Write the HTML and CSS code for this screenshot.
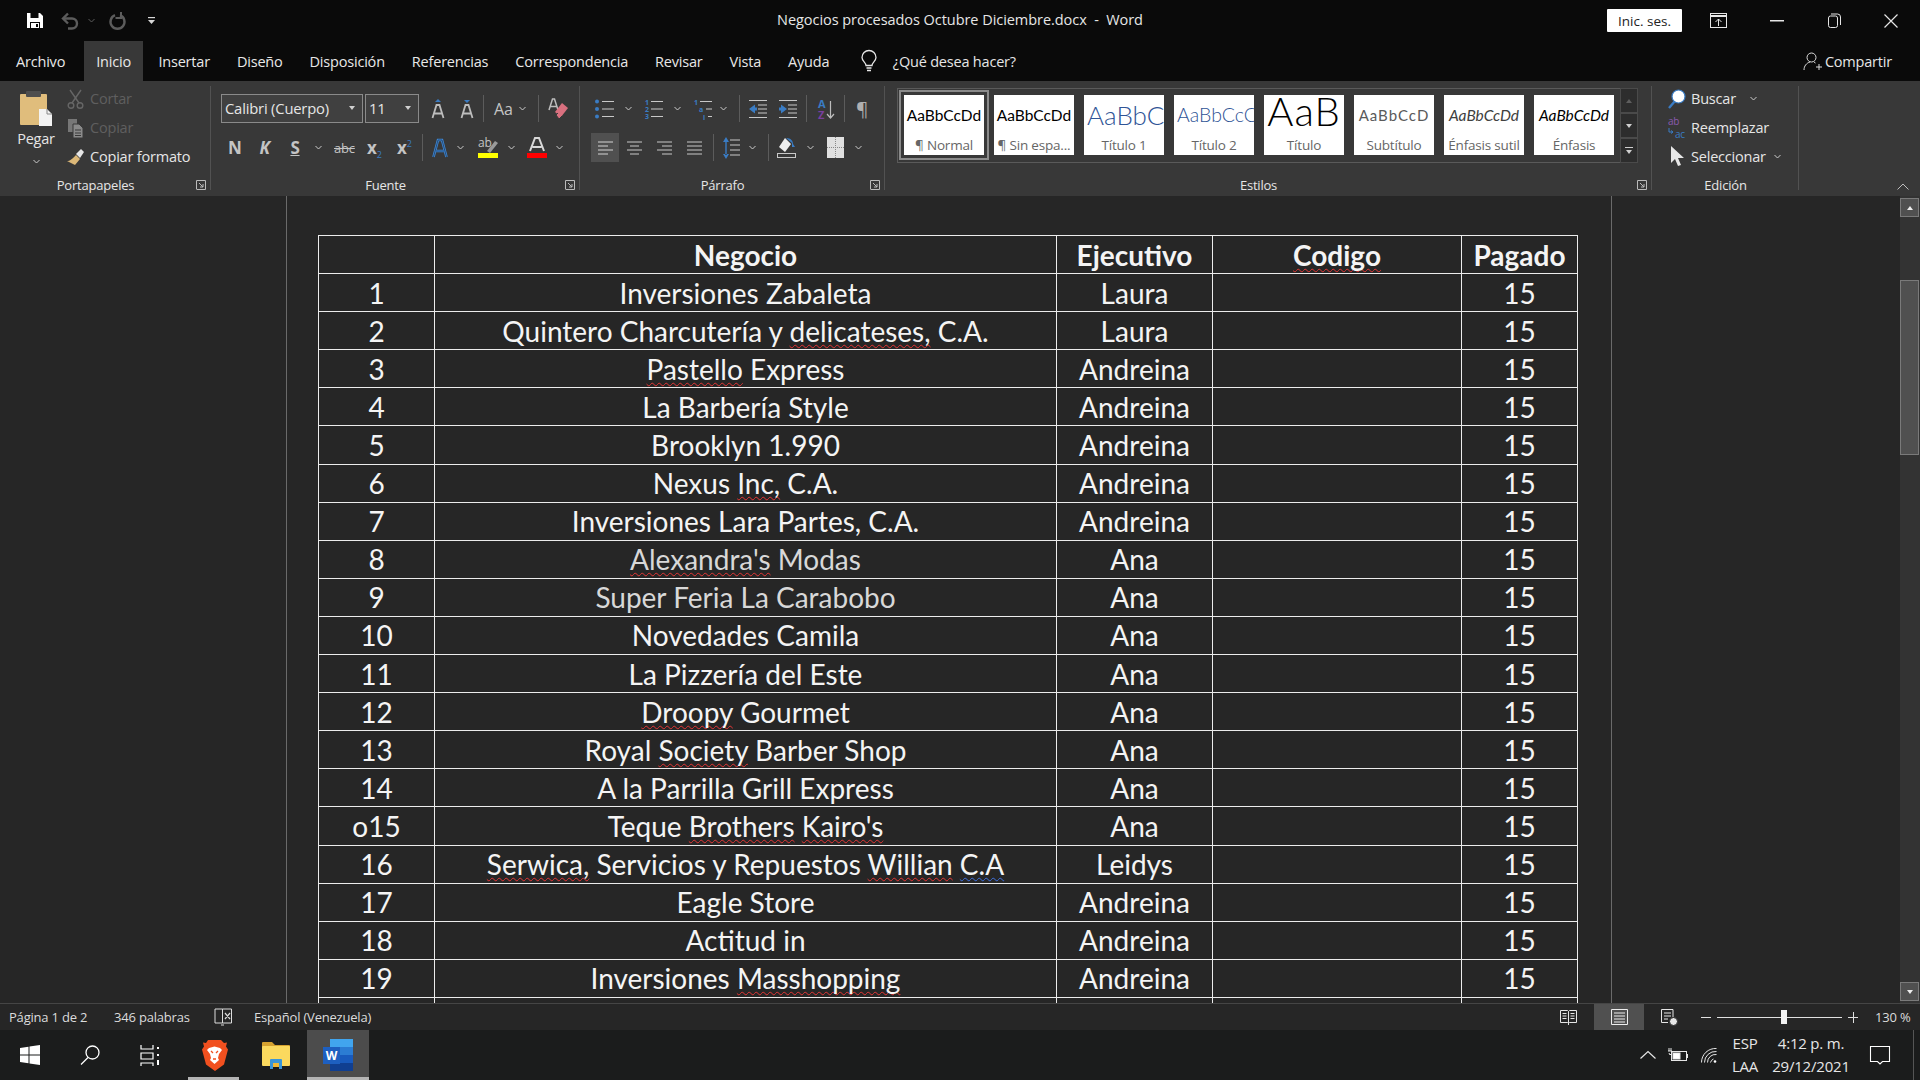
FILE: index.html
```html
<!DOCTYPE html>
<html lang="es">
<head>
  <meta charset="UTF-8">
  <title>Negocios procesados Octubre Diciembre.docx - Word</title>
  <link rel="stylesheet" href="styles.css">
</head>
<body>
<div class="app">

  <!-- title bar -->
  <header class="titlebar">
    <div class="qat">
      <svg class="ml26" width="18" height="17" viewBox="0 0 18 17"><path d="M1 1h13l3 3v12H1z" fill="#fff"/><rect x="4.5" y="1" width="8" height="5" fill="#0a0a0a"/><rect x="4" y="10" width="10" height="6" fill="#0a0a0a"/><rect x="5" y="11" width="8" height="5" fill="#fff"/><rect x="10" y="12" width="2" height="3" fill="#0a0a0a"/></svg>
      <svg class="ml17" width="18" height="17" viewBox="0 0 18 17" fill="none" stroke="#5c5c5c" stroke-width="2.4"><path d="M7 1.5 2 6.5l5 5"/><path d="M2 6.5h9a5 5 0 0 1 0 10H7"/></svg>
      <svg class="ml9" width="7" height="5" viewBox="0 0 7 5" fill="none" stroke="#5c5c5c"><path d="m.5 1 3 3 3-3"/></svg>
      <svg class="ml14" width="17" height="18" viewBox="0 0 17 18" fill="none" stroke="#5c5c5c" stroke-width="2.4"><path d="M11 3.2a7 7 0 1 1-5 0"/><path d="M12 0v6H6.5" stroke-width="2"/></svg>
      <svg class="ml22" width="7" height="8" viewBox="0 0 7 8" fill="#d8d8d8"><rect x="0" y="0" width="7" height="1.2"/><path d="M0 3h7L3.500 7z"/></svg>
    </div>
    <div class="doc-title">Negocios procesados Octubre Diciembre.docx &nbsp;-&nbsp; Word</div>
    <div class="window-ctrls">
      <button class="signin">Inic. ses.</button>
      <svg class="ml28" width="18" height="15" viewBox="0 0 18 15" fill="none" stroke="#e6e6e6"><rect x=".5" y=".5" width="16" height="14"/><path d="M.5 3h16" stroke-width="2"/><path d="M8.500 13V6M5.500 9l3-3 3 3"/></svg>
      <svg class="ml42" width="14" height="2" viewBox="0 0 14 2"><rect width="14" height="1.500" fill="#e6e6e6"/></svg>
      <svg class="ml44" width="13" height="15" viewBox="0 0 13 15" fill="none" stroke="#e6e6e6"><rect x=".5" y="3" width="9" height="11.500" rx="2"/><path d="M3 1h6.500a3 3 0 0 1 3 3v8"/></svg>
      <svg class="ml43" width="14" height="14" viewBox="0 0 14 14" stroke="#e6e6e6" stroke-width="1.200"><path d="m.5.500 13 13M13.500.500l-13 13"/></svg>
    </div>
  </header>

  <!-- tabs -->
  <nav class="tabs">
    <a class="tab first">Archivo</a>
    <a class="tab active">Inicio</a>
    <a class="tab">Insertar</a>
    <a class="tab">Diseño</a>
    <a class="tab">Disposición</a>
    <a class="tab">Referencias</a>
    <a class="tab">Correspondencia</a>
    <a class="tab">Revisar</a>
    <a class="tab">Vista</a>
    <a class="tab">Ayuda</a>
    <svg class="bulb" width="16" height="21" viewBox="0 0 16 21" fill="none" stroke="#e6e6e6" stroke-width="1.300"><path d="M5 14.500c0-3-4-4.500-4-8a7 7 0 0 1 14 0c0 3.500-4 5-4 8z"/><path d="M5.500 17h5M6 19.500h4"/></svg>
    <span class="tell-me">¿Qué desea hacer?</span>
    <div class="share">
      <svg width="19" height="19" viewBox="0 0 19 19" fill="none" stroke="#dcdcdc"><circle cx="8.500" cy="5.500" r="4.500"/><path d="M1 18c0-4 2.500-7 6-8M11 10l1.500 1M13 15h6M16 12v6"/></svg>
      <span>Compartir</span>
    </div>
  </nav>

  <!-- ribbon -->
  <section class="ribbon">

    <div class="group clip-group">
      <div class="group-body">
        <div class="paste">
          <svg width="34" height="36" viewBox="0 0 34 36"><rect x="1" y="4" width="27" height="31" rx="1" fill="#e0bd7c"/><rect x="7" y="1" width="15" height="6" rx="1" fill="#4e4e4e"/><path d="M20 19h8l5 5v12H20z" fill="#f2f2f2"/><path d="M28 19v5h5" fill="none" stroke="#888"/></svg>
          <span class="paste-label">Pegar</span>
          <svg width="7" height="5" viewBox="0 0 7 5" fill="none" stroke="#ccc"><path d="m.5 1 3 3 3-3"/></svg>
        </div>
        <div class="small-btns">
          <div class="small-btn off">
            <svg width="17" height="20" viewBox="0 0 17 20" fill="none" stroke="#666" stroke-width="1.400"><path d="M3 1l9 13M14 1 5 14"/><circle cx="4" cy="16.500" r="2.800"/><circle cx="13" cy="16.500" r="2.800"/></svg>
            <span>Cortar</span>
          </div>
          <div class="small-btn off">
            <svg width="17" height="20" viewBox="0 0 17 20"><rect x="1" y="1" width="9" height="13" fill="#777"/><path d="M6 6h6l4 4v10H6z" fill="#8a8a8a" stroke="#383838"/><path d="M8 12h6M8 15h6M8 17.500h6" stroke="#383838"/></svg>
            <span>Copiar</span>
          </div>
          <div class="small-btn">
            <svg width="17" height="18" viewBox="0 0 17 18"><path d="M9 7l4 4-5 6-8-4c3 0 5-2 9-6z" fill="#dcb878"/><path d="m9 6 5-5 3 3-4 6z" fill="#e6e6e6"/></svg>
            <span>Copiar formato</span>
          </div>
        </div>
      </div>
      <div class="group-label">Portapapeles</div>
      <svg class="launcher" width="10" height="10" viewBox="0 0 10 10" fill="none" stroke="#bbb"><path d="M.5 9V.5H9.500V9.500H.5"/><path d="M3 3l4 4M7 4v3H4"/></svg>
    </div>

    <div class="group font-group">
      <div class="tool-row">
        <div class="combo font-name"><span>Calibri (Cuerpo)</span><i class="tri"></i></div>
        <div class="combo font-size ml2"><span>11</span><i class="tri"></i></div>
        <svg class="ml11" width="16" height="20" viewBox="0 0 16 20"><path d="M8 0l3 3H5z" fill="#3a7cc4"/><path d="M2.500 19 6.500 6h3l4 13M4.500 14.500h7" fill="none" stroke="#bdbdbd" stroke-width="1.800"/></svg>
        <svg class="ml13" width="16" height="20" viewBox="0 0 16 20"><path d="M8 4l3-3H5z" fill="#3a7cc4"/><path d="M2.500 19 6.500 6h3l4 13M4.500 14.500h7" fill="none" stroke="#bdbdbd" stroke-width="1.800"/></svg>
        <i class="vsep ml8"></i>
        <span class="aa ml10">Aa</span>
        <svg class="ml6" width="7" height="5" viewBox="0 0 7 5" fill="none" stroke="#ccc"><path d="m.5 1 3 3 3-3"/></svg>
        <i class="vsep ml12"></i>
        <svg class="ml9" width="21" height="22" viewBox="0 0 21 22"><path d="M1 12 4.500 1h2L10 12M2.500 8.500h6" fill="none" stroke="#bdbdbd" stroke-width="1.500"/><path d="m14 5 6 5-7 9-6-5z" fill="#d9707f"/><path d="m10 15-2 2 3 4 3-3" fill="#d9707f" stroke="#383838"/></svg>
      </div>
      <div class="tool-row">
        <span class="fmt fmt-n ml7">N</span>
        <span class="fmt fmt-k ml19">K</span>
        <span class="fmt fmt-s ml20">S</span>
        <svg class="ml15" width="7" height="5" viewBox="0 0 7 5" fill="none" stroke="#ccc"><path d="m.5 1 3 3 3-3"/></svg>
        <span class="fmt fmt-abc ml12">abc</span>
        <span class="fmt fmt-x ml13">x<sub>2</sub></span>
        <span class="fmt fmt-x ml16">x<sup>2</sup></span>
        <i class="vsep ml11"></i>
        <svg class="ml9" width="16" height="20" viewBox="0 0 16 20"><path d="M1.500 19 6 2h4l4.500 17M4 13h8" fill="none" stroke="#3f86d2" stroke-width="2.600"/><path d="M1.500 19 6 2h4l4.500 17M4 13h8" fill="none" stroke="#1d3d63" stroke-width=".8"/></svg>
        <svg class="ml9" width="7" height="5" viewBox="0 0 7 5" fill="none" stroke="#ccc"><path d="m.5 1 3 3 3-3"/></svg>
        <svg class="ml14" width="20" height="20" viewBox="0 0 20 20"><text x="0" y="9" class="svg-ab">ab</text><path d="m9 13 8-10 3 2-8 10z" fill="#9a9a9a"/><rect y="15" width="20" height="5" fill="#ff0"/></svg>
        <svg class="ml10" width="7" height="5" viewBox="0 0 7 5" fill="none" stroke="#ccc"><path d="m.5 1 3 3 3-3"/></svg>
        <svg class="ml12" width="20" height="21" viewBox="0 0 20 21"><path d="M3 14 8 1h4l5 13M5.500 10h9" fill="none" stroke="#d8d8d8" stroke-width="2"/><rect y="16" width="20" height="5" fill="#f00"/></svg>
        <svg class="ml9" width="7" height="5" viewBox="0 0 7 5" fill="none" stroke="#ccc"><path d="m.5 1 3 3 3-3"/></svg>
      </div>
      <div class="group-label">Fuente</div>
      <svg class="launcher" width="10" height="10" viewBox="0 0 10 10" fill="none" stroke="#bbb"><path d="M.5 9V.5H9.500V9.500H.5"/><path d="M3 3l4 4M7 4v3H4"/></svg>
    </div>

    <div class="group para-group">
      <div class="tool-row">
        <svg class="ml4" width="19" height="20" viewBox="0 0 19 20"><g fill="#3a7cc4"><circle cx="2" cy="2.500" r="2"/><circle cx="2" cy="10" r="2"/><circle cx="2" cy="17.500" r="2"/></g><path d="M7 2.500h12M7 10h12M7 17.500h12" stroke="#c8c8c8" stroke-width="1.200"/></svg>
        <svg class="ml11" width="7" height="5" viewBox="0 0 7 5" fill="none" stroke="#ccc"><path d="m.5 1 3 3 3-3"/></svg>
        <svg class="ml13" width="18" height="20" viewBox="0 0 18 20"><g class="svg-num"><text x="0" y="6">1</text><text x="0" y="13">2</text><text x="0" y="20">3</text></g><path d="M6 2.500h12M6 10h12M6 17.500h12" stroke="#c8c8c8" stroke-width="1.200"/></svg>
        <svg class="ml11" width="7" height="5" viewBox="0 0 7 5" fill="none" stroke="#ccc"><path d="m.5 1 3 3 3-3"/></svg>
        <svg class="ml13" width="18" height="20" viewBox="0 0 18 20"><g class="svg-num"><text x="0" y="6">1</text><text x="5" y="13">a</text><text x="9" y="21">i</text></g><path d="M6 2.500h12M12 10h6M14 17.500h4" stroke="#c8c8c8" stroke-width="1.200"/></svg>
        <svg class="ml8" width="7" height="5" viewBox="0 0 7 5" fill="none" stroke="#ccc"><path d="m.5 1 3 3 3-3"/></svg>
        <i class="vsep ml12"></i>
        <svg class="ml9" width="18" height="20" viewBox="0 0 18 20"><path d="M0 1.500h18M9 6h9M9 10h9M9 14h9M0 18.500h18" stroke="#c8c8c8" stroke-width="1.200"/><path d="M0 10 6 5.500v3h2v3H6v3z" fill="#3a7cc4"/></svg>
        <svg class="ml12" width="18" height="20" viewBox="0 0 18 20"><path d="M0 1.500h18M9 6h9M9 10h9M9 14h9M0 18.500h18" stroke="#c8c8c8" stroke-width="1.200"/><path d="M8 10 2 5.500v3H0v3h2v3z" fill="#3a7cc4"/></svg>
        <i class="vsep ml9"></i>
        <svg class="ml11" width="16" height="22" viewBox="0 0 16 22"><text x="0" y="10" class="svg-az az-a">A</text><text x="0" y="21" class="svg-az az-z">Z</text><path d="M12.500 3v17M9 16l3.500 4 3.500-4" fill="none" stroke="#bdbdbd" stroke-width="1.200"/></svg>
        <i class="vsep ml10"></i>
        <span class="pilcrow ml11">¶</span>
      </div>
      <div class="tool-row">
        <span class="align-on"><svg width="15" height="14" viewBox="0 0 15 14" stroke="#d4d4d4" stroke-width="1.200"><path d="M0 1h15M0 5h10M0 9h15M0 13h10"/></svg></span>
        <svg class="ml8" width="15" height="14" viewBox="0 0 15 14" stroke="#c8c8c8" stroke-width="1.200"><path d="M0 1h15M3 5h9M0 9h15M3 13h9"/></svg>
        <svg class="ml15" width="15" height="14" viewBox="0 0 15 14" stroke="#c8c8c8" stroke-width="1.200"><path d="M0 1h15M5 5h10M0 9h15M5 13h10"/></svg>
        <svg class="ml15" width="15" height="14" viewBox="0 0 15 14" stroke="#c8c8c8" stroke-width="1.200"><path d="M0 1h15M0 5h15M0 9h15M0 13h15"/></svg>
        <i class="vsep ml11"></i>
        <svg class="ml9" width="17" height="22" viewBox="0 0 17 22"><path d="M7 3h10M7 8h10M7 13h10M7 18h10" stroke="#c8c8c8" stroke-width="1.200"/><path d="M3 0l3 5H0zM3 22l3-5H0zM2.300 4h1.400v14H2.300z" fill="#3a7cc4"/></svg>
        <svg class="ml9" width="7" height="5" viewBox="0 0 7 5" fill="none" stroke="#ccc"><path d="m.5 1 3 3 3-3"/></svg>
        <i class="vsep ml12"></i>
        <svg class="ml8" width="19" height="21" viewBox="0 0 19 21"><path d="m8 1 6 6-6 8-6-5z" fill="#eee"/><path d="M9 1c5 0 7 3 7 6l2 3h-3V6" fill="#3a7cc4"/><rect x=".5" y="16.500" width="18" height="4" fill="none" stroke="#c8c8c8"/></svg>
        <svg class="ml11" width="7" height="5" viewBox="0 0 7 5" fill="none" stroke="#ccc"><path d="m.5 1 3 3 3-3"/></svg>
        <svg class="ml13" width="17" height="21" viewBox="0 0 17 21"><rect width="17" height="21" fill="#e0e0e0"/><path d="M8.500 0v21M0 10.500h17" stroke="#888" stroke-dasharray="1 1"/></svg>
        <svg class="ml11" width="7" height="5" viewBox="0 0 7 5" fill="none" stroke="#ccc"><path d="m.5 1 3 3 3-3"/></svg>
      </div>
      <div class="group-label">Párrafo</div>
      <svg class="launcher" width="10" height="10" viewBox="0 0 10 10" fill="none" stroke="#bbb"><path d="M.5 9V.5H9.500V9.500H.5"/><path d="M3 3l4 4M7 4v3H4"/></svg>
    </div>

    <div class="group styles-group">
      <div class="gallery-wrap">
        <div class="gallery">
          <div class="style-tile selected"><div class="sample s-normal">AaBbCcDd</div><div class="tile-label">¶ Normal</div></div>
          <div class="style-tile"><div class="sample s-normal">AaBbCcDd</div><div class="tile-label">¶ Sin espa...</div></div>
          <div class="style-tile"><div class="sample s-h1">AaBbCc</div><div class="tile-label">Título 1</div></div>
          <div class="style-tile"><div class="sample s-h2">AaBbCcC</div><div class="tile-label">Título 2</div></div>
          <div class="style-tile"><div class="sample s-title">AaB</div><div class="tile-label">Título</div></div>
          <div class="style-tile"><div class="sample s-sub">AaBbCcD</div><div class="tile-label">Subtítulo</div></div>
          <div class="style-tile"><div class="sample s-em-soft">AaBbCcDd</div><div class="tile-label">Énfasis sutil</div></div>
          <div class="style-tile"><div class="sample s-em">AaBbCcDd</div><div class="tile-label">Énfasis</div></div>
        </div>
        <div class="gallery-scroll">
          <div class="gs-btn"><i class="tri up dim"></i></div>
          <div class="gs-btn"><i class="tri"></i></div>
          <div class="gs-btn more"><b></b><i class="tri"></i></div>
        </div>
      </div>
      <div class="group-label">Estilos</div>
      <svg class="launcher" width="10" height="10" viewBox="0 0 10 10" fill="none" stroke="#bbb"><path d="M.5 9V.5H9.500V9.500H.5"/><path d="M3 3l4 4M7 4v3H4"/></svg>
    </div>

    <div class="group edit-group">
      <div class="small-btns">
        <div class="small-btn">
          <svg width="18" height="20" viewBox="0 0 18 20"><path d="M1 19l6-7" stroke="#3a7cc4" stroke-width="2.400"/><circle cx="10.500" cy="7.500" r="6.500" fill="#fff" stroke="#3a7cc4" stroke-width="1.200"/></svg>
          <span>Buscar</span>
          <svg class="ml9" width="7" height="5" viewBox="0 0 7 5" fill="none" stroke="#ccc"><path d="m.5 1 3 3 3-3"/></svg>
        </div>
        <div class="small-btn">
          <svg width="18" height="20" viewBox="0 0 18 20"><text x="0" y="7" class="svg-rep rep-ab">ab</text><text x="7" y="20" class="svg-rep rep-ac">ac</text><path d="M1 10v4h4M3 12.500 5 14l-2 1.500" fill="none" stroke="#3a7cc4"/></svg>
          <span>Reemplazar</span>
        </div>
        <div class="small-btn">
          <svg width="18" height="21" viewBox="0 0 18 21"><path d="M3 0v17l4-4 3 7 3-1-3-7h6z" fill="#e6e6e6"/></svg>
          <span>Seleccionar</span>
          <svg class="ml3" width="7" height="5" viewBox="0 0 7 5" fill="none" stroke="#ccc"><path d="m.5 1 3 3 3-3"/></svg>
        </div>
      </div>
      <div class="group-label center">Edición</div>
    </div>

    <div class="ribbon-end">
      <svg width="12" height="7" viewBox="0 0 12 7" fill="none" stroke="#bdbdbd"><path d="m.5 6.500 5.500-5.500 5.500 5.500"/></svg>
    </div>
  </section>

  <!-- document -->
  <main class="doc-area">
    <div class="page">
      <table class="grid">
        <colgroup><col class="c-num"><col class="c-name"><col class="c-exec"><col class="c-code"><col class="c-paid"></colgroup>
        <thead>
          <tr><th></th><th>Negocio</th><th>Ejecutivo</th><th><u>Codigo</u></th><th>Pagado</th></tr>
        </thead>
        <tbody>
          <tr><td>1</td><td>Inversiones Zabaleta</td><td>Laura</td><td></td><td>15</td></tr>
          <tr><td>2</td><td>Quintero Charcutería y <u>delicateses,</u> C.A.</td><td>Laura</td><td></td><td>15</td></tr>
          <tr><td>3</td><td><u>Pastello</u> Express</td><td>Andreina</td><td></td><td>15</td></tr>
          <tr><td>4</td><td>La Barbería Style</td><td>Andreina</td><td></td><td>15</td></tr>
          <tr><td>5</td><td>Brooklyn 1.990</td><td>Andreina</td><td></td><td>15</td></tr>
          <tr><td>6</td><td>Nexus <u>Inc,</u> C.A.</td><td>Andreina</td><td></td><td>15</td></tr>
          <tr><td>7</td><td>Inversiones Lara Partes, C.A.</td><td>Andreina</td><td></td><td>15</td></tr>
          <tr><td>8</td><td class="soft"><u>Alexandra's</u> Modas</td><td>Ana</td><td></td><td>15</td></tr>
          <tr><td>9</td><td class="soft">Super Feria La Carabobo</td><td>Ana</td><td></td><td>15</td></tr>
          <tr><td>10</td><td>Novedades Camila</td><td>Ana</td><td></td><td>15</td></tr>
          <tr><td>11</td><td>La Pizzería del Este</td><td>Ana</td><td></td><td>15</td></tr>
          <tr><td>12</td><td><u>Droopy</u> Gourmet</td><td>Ana</td><td></td><td>15</td></tr>
          <tr><td>13</td><td>Royal <u>Society</u> Barber Shop</td><td>Ana</td><td></td><td>15</td></tr>
          <tr><td>14</td><td>A la Parrilla Grill Express</td><td>Ana</td><td></td><td>15</td></tr>
          <tr><td>o15</td><td>Teque <u>Brothers</u> <u>Kairo's</u></td><td>Ana</td><td></td><td>15</td></tr>
          <tr><td>16</td><td><u>Serwica,</u> Servicios y Repuestos <u>Willian</u> <u class="grammar">C.A</u></td><td>Leidys</td><td></td><td>15</td></tr>
          <tr><td>17</td><td>Eagle Store</td><td>Andreina</td><td></td><td>15</td></tr>
          <tr><td>18</td><td>Actitud in</td><td>Andreina</td><td></td><td>15</td></tr>
          <tr><td>19</td><td>Inversiones <u>Masshopping</u></td><td>Andreina</td><td></td><td>15</td></tr>
          <tr><td></td><td></td><td></td><td></td><td></td></tr>
        </tbody>
      </table>
    </div>
    <div class="scrollbar">
      <div class="sb-btn"><i class="tri up light"></i></div>
      <div class="sb-thumb"></div>
      <div class="sb-btn down"><i class="tri light"></i></div>
    </div>
  </main>

  <!-- status bar -->
  <footer class="statusbar">
    <span class="st-page">Página 1 de 2</span>
    <span class="st-words">346 palabras</span>
    <svg class="st-proof" width="18" height="18" viewBox="0 0 18 18" fill="none" stroke="#dcdcdc"><path d="M8.500 1H1v14h7.500zM8.500 1h9v14h-9"/><path d="M7 17h3M11 5l5 6M16 5l-5 6" stroke-width="1.200"/></svg>
    <span class="st-lang">Español (Venezuela)</span>
    <div class="st-right">
      <svg width="17" height="17" viewBox="0 0 17 17" fill="none" stroke="#e6e6e6"><path d="M.5 1.500h7l1 1 1-1h7v12h-7l-1 1-1-1h-7zM8.500 2.500V16M2.500 4.500h4M2.500 7h4M2.500 9.500h4M10.500 4.500h4M10.500 7h4M10.500 9.500h4"/></svg>
      <span class="view-on"><svg width="17" height="16" viewBox="0 0 17 16" fill="none" stroke="#eee"><path d="M.5.500h16v15H.5zM3 4h11M3 7h11M3 10h11M3 13h11"/></svg></span>
      <svg class="ml17" width="17" height="17" viewBox="0 0 17 17" fill="none" stroke="#e6e6e6"><path d="M12 8V.500H.5v13H7M3 4h7M3 7h7M3 10h4"/><circle cx="12.500" cy="12.500" r="4" fill="#e6e6e6" stroke="#262626"/></svg>
      <span class="zoom-btn ml23"></span>
      <div class="slider ml6"><i></i></div>
      <span class="zoom-btn plus ml6"></span>
      <span class="zoom-text">130 %</span>
    </div>
  </footer>

  <!-- taskbar -->
  <div class="taskbar">
    <div class="task-cell">
      <svg width="20" height="20" viewBox="0 0 20 20" fill="#fff"><path d="M0 3l8.500-1.300v7.800H0zM9.500 1.500 20 0v9.500H9.500zM0 10.500h8.500v7.800L0 17zM9.500 10.500H20V20L9.500 18.500z"/></svg>
    </div>
    <div class="task-cell">
      <svg width="20" height="20" viewBox="0 0 20 20" fill="none" stroke="#fff" stroke-width="1.300"><circle cx="12.500" cy="7.500" r="6.500"/><path d="M8 12.500 1 19.500"/></svg>
    </div>
    <div class="task-cell">
      <svg width="20" height="21" viewBox="0 0 20 21" fill="none" stroke="#fff" stroke-width="1.200"><path d="M1 0v4h12V0M1 8h12v6H1zM1 21v-3h12v3"/><path d="M18 2v2M18 9v2M18 15v5" stroke-width="2"/></svg>
    </div>
    <div class="task-cell app-cell running">
      <svg width="27" height="31" viewBox="0 0 27 31"><path d="M7 0h13l3 3 3-.500-1 4 2 3-4 15-9 6.500-9-6.500L1 9.500l2-3-1-4 3 .500z" fill="#f1501f"/><path d="M8 8l5.500-1.500L19 8l2 2-3 4-1 4 1 2-4.500 4L9 20l1-2-1-4-3-4z" fill="#fff"/><path d="M10 11l2 2M17 11l-2 2M12 19h3" stroke="#f1501f" stroke-width="1.300"/></svg>
    </div>
    <div class="task-cell app-cell">
      <svg width="28" height="29" viewBox="0 0 28 29"><path d="M0 2a1 1 0 0 1 1-1h9l3 3h14a1 1 0 0 1 1 1v4H0z" fill="#d6a230"/><rect y="5" width="28" height="20" rx="1" fill="#fbd95e"/><path d="M8 28V19a1 1 0 0 1 1-1h10a1 1 0 0 1 1 1v9h-3v-6h-6v6z" fill="#3a95d8"/><rect x="11" y="22" width="6" height="4" fill="#f0b838"/></svg>
    </div>
    <div class="task-cell app-cell active-app">
      <div class="word-icon">
        <span class="w-layer l1"></span><span class="w-layer l2"></span><span class="w-layer l3"></span><span class="w-layer l4"></span>
        <span class="w-badge">W</span>
      </div>
    </div>
    <div class="tray">
      <svg width="16" height="8" viewBox="0 0 16 8" fill="none" stroke="#e6e6e6" stroke-width="1.200"><path d="m.5 7.500 7.500-7 7.500 7"/></svg>
      <svg class="ml12" width="20" height="14" viewBox="0 0 20 14" fill="none" stroke="#e6e6e6"><rect x="3.500" y="3.500" width="15" height="9"/><rect x="5" y="5" width="7" height="6" fill="#fff"/><path d="M19.500 6v4M1 0v3M3 0v3M0 3h4v2l-2 2-1-2" stroke-width="1"/></svg>
      <svg class="ml13" width="16" height="15" viewBox="0 0 16 15" fill="none" stroke="#e6e6e6"><path d="M.5 14.500a14 14 0 0 1 15-14M3.500 14.500a11 11 0 0 1 12-11M6.500 14.500a8 8 0 0 1 9-8M9.500 14.500a5 5 0 0 1 3-3.500"/><circle cx="14" cy="13.500" r="1.300" fill="#fff" stroke="none"/></svg>
      <div class="lang">ESP<br>LAA</div>
      <div class="clock">4:12 p. m.<br>29/12/2021</div>
      <svg class="ml19" width="20" height="19" viewBox="0 0 20 19" fill="none" stroke="#fff" stroke-width="1.100"><path d="M.5.500h19v15h-7l-2.500 2.500-2.500-2.500h-7z"/></svg>
      <i class="show-desktop"></i>
    </div>
  </div>
</div>
</body>
</html>
```

FILE: styles.css
```css
* {
  box-sizing: border-box;
}

html, body {
  margin: 0;
  padding: 0;
  background: #262626;
}

body {
  font-family: "Open Sans", "Noto Sans", sans-serif;
  font-size: 13.5px;
  letter-spacing: -0.2px;
  color: #e6e6e6;
}

svg {
  display: block;
  flex: none;
  overflow: visible;
}

i, b {
  display: block;
  flex: none;
}

/* spacing helpers, the ribbon tools are not evenly spaced */
.ml2 { margin-left: 2px; }
.ml3 { margin-left: 3px; }
.ml4 { margin-left: 4px; }
.ml6 { margin-left: 6px; }
.ml7 { margin-left: 7px; }
.ml8 { margin-left: 8px; }
.ml9 { margin-left: 9px; }
.ml10 { margin-left: 10px; }
.ml11 { margin-left: 11px; }
.ml12 { margin-left: 12px; }
.ml13 { margin-left: 13px; }
.ml14 { margin-left: 14px; }
.ml15 { margin-left: 15px; }
.ml16 { margin-left: 16px; }
.ml17 { margin-left: 17px; }
.ml19 { margin-left: 19px; }
.ml20 { margin-left: 20px; }
.ml22 { margin-left: 22px; }
.ml23 { margin-left: 23px; }
.ml26 { margin-left: 26px; }
.ml28 { margin-left: 28px; }
.ml42 { margin-left: 42px; }
.ml43 { margin-left: 43px; }
.ml44 { margin-left: 44px; }

.app {
  width: 1920px;
  height: 1080px;
  display: flex;
  flex-direction: column;
  overflow: hidden;
}

/* title bar */
.titlebar {
  height: 41px;
  flex: none;
  display: grid;
  grid-template-columns: 1fr auto 1fr;
  align-items: center;
  background: #0a0a0a;
}

.qat {
  display: flex;
  align-items: center;
}

.doc-title {
  padding-bottom: 2px;
  font-size: 14.5px;
  letter-spacing: -0.05px;
  color: #e6e6e6;
}

.window-ctrls {
  display: flex;
  align-items: center;
  justify-content: flex-end;
  padding-right: 22px;
}

.signin {
  width: 75px;
  height: 23px;
  padding: 0;
  border: none;
  border-radius: 1px;
  background: #fff;
  color: #222;
  font: inherit;
  font-size: 13.5px;
}

/* tabs */
.tabs {
  height: 40px;
  flex: none;
  display: flex;
  align-items: stretch;
  background: #0a0a0a;
}

.tab {
  display: flex;
  align-items: center;
  padding: 0 13.5px;
  font-size: 14.5px;
  color: #e8e8e8;
}

.tab.first {
  padding: 0 19px 0 16px;
}

.tab.active {
  padding: 0 12px;
  margin-right: 2px;
  background: #383838;
}

.bulb {
  align-self: center;
  margin-left: 18px;
}

.tell-me {
  align-self: center;
  margin-left: 16px;
  font-size: 14.5px;
}

.share {
  margin-left: auto;
  padding-right: 28px;
  display: flex;
  align-items: center;
  gap: 3px;
  font-size: 14.5px;
}

/* ribbon */
.ribbon {
  height: 115px;
  flex: none;
  display: flex;
  background: #383838;
}

.group {
  position: relative;
  flex: none;
  display: flex;
  flex-direction: column;
}

.group::after {
  content: "";
  position: absolute;
  right: 0;
  top: 5px;
  bottom: 6px;
  width: 1px;
  background: #525252;
}

.group-label {
  margin-top: auto;
  height: 22px;
  line-height: 22px;
  padding-right: 20px;
  text-align: center;
  font-size: 13px;
  color: #e6e6e6;
}

.group-label.center {
  padding-right: 0;
}

.launcher {
  position: absolute;
  right: 5px;
  bottom: 6px;
}

.clip-group { width: 211px; }
.font-group { width: 369px; padding: 13px 0 0 10px; }
.para-group { width: 305px; padding: 13px 0 0 11px; }
.styles-group { width: 767px; padding: 7px 0 0 12px; }
.edit-group { width: 147px; padding: 3px 0 0 16px; }

.font-group .group-label { margin-left: -10px; }
.para-group .group-label { margin-left: -11px; }
.styles-group .group-label { margin-left: -12px; }
.edit-group .group-label { margin-left: -16px; }

.group-body {
  display: flex;
  padding-top: 3px;
}

.paste {
  display: flex;
  flex-direction: column;
  align-items: center;
  width: 48px;
  padding: 6px 0 0 0;
  margin: 0 7px 0 12px;
}

.paste-label {
  margin: 2px 0 10px;
  font-size: 14.5px;
  line-height: 21px;
}

.small-btns {
  display: flex;
  flex-direction: column;
}

.small-btn {
  height: 29px;
  display: flex;
  align-items: center;
  gap: 6px;
  font-size: 14.5px;
}

.small-btn.off {
  color: #5f5f5f;
}

.tool-row {
  height: 29px;
  margin-bottom: 10px;
  display: flex;
  align-items: center;
}

.combo {
  height: 29px;
  display: flex;
  align-items: center;
  justify-content: space-between;
  padding: 0 7px 2px 3px;
  border: 1px solid #8a8a8a;
  background: #404040;
  font-size: 14.8px;
}

.font-name { width: 142px; }
.font-size { width: 54px; }

.tri {
  width: 0;
  height: 0;
  border-left: 3.5px solid transparent;
  border-right: 3.5px solid transparent;
  border-top: 4px solid #d0d0d0;
}

.tri.up {
  border-top: none;
  border-bottom: 4px solid #d0d0d0;
}

.tri.dim { border-bottom-color: #5e5e5e; }
.tri.light { border-top-color: #eee; border-bottom-color: #eee; }

.vsep {
  width: 1px;
  height: 27px;
  background: #5c5c5c;
}

.aa {
  width: 19px;
  font-size: 16px;
  color: #c4c4c4;
}

.fmt {
  display: block;
  color: #c4c4c4;
  line-height: 20px;
  text-align: center;
}

.fmt-n, .fmt-k, .fmt-s {
  font-size: 17px;
  font-weight: 700;
}

.fmt-n { width: 12px; }
.fmt-k { width: 11px; font-style: italic; }
.fmt-s { width: 10px; text-decoration: underline; }

.fmt-abc {
  width: 20px;
  font-size: 13px;
  text-decoration: line-through;
}

.fmt-x {
  width: 14px;
  font-size: 17px;
  font-weight: 700;
}

.fmt-x sub, .fmt-x sup {
  font-size: 9px;
  font-weight: 400;
  color: #3a7cc4;
  line-height: 0;
}

.svg-ab { font-size: 12px; fill: #c4c4c4; }
.svg-num text { font-size: 7px; font-weight: 700; fill: #3a7cc4; }
.svg-az { font-size: 11px; font-weight: 700; }
.az-a { fill: #3a7cc4; }
.az-z { fill: #7a3fa0; }
.svg-rep { font-size: 10px; }
.rep-ab { fill: #8a5ab0; }
.rep-ac { fill: #3a7cc4; }

.pilcrow {
  width: 11px;
  font-size: 19px;
  color: #b0b0b0;
}

.align-on {
  width: 28px;
  height: 29px;
  display: flex;
  align-items: center;
  justify-content: center;
  background: #505050;
}

/* style gallery */
.gallery-wrap {
  width: 741px;
  height: 75px;
  display: flex;
}

.gallery {
  width: 724px;
  height: 75px;
  display: flex;
  gap: 10px;
  padding: 6px 0 0 6px;
  border: 1px solid #5a5a5a;
}

.style-tile {
  width: 80px;
  height: 60px;
  flex: none;
  background: #fff;
  color: #000;
}

.style-tile.selected {
  outline: 2px solid #8a8a8a;
  outline-offset: 3px;
}

.sample {
  height: 40px;
  line-height: 40px;
  overflow: hidden;
  white-space: nowrap;
  text-align: center;
  letter-spacing: 0;
  font-family: Lato, sans-serif;
}

.s-normal { font-size: 15.500px; }
.s-h1 { font-size: 26px; color: #2f5496; font-weight: 300; text-align: left; padding-left: 3px; }
.s-h2 { font-size: 19.500px; color: #2f5496; font-weight: 300; text-align: left; padding-left: 3px; }
.s-title { font-size: 40px; font-weight: 300; line-height: 32px; letter-spacing: 1px; }
.s-sub { font-size: 15px; color: #5a5a5a; letter-spacing: 1px; }
.s-em-soft { font-size: 15.500px; font-style: italic; color: #404040; }
.s-em { font-size: 15.500px; font-style: italic; }

.tile-label {
  height: 20px;
  line-height: 21px;
  text-align: center;
  white-space: nowrap;
  overflow: hidden;
  font-size: 13.500px;
  color: #666;
}

.gallery-scroll {
  width: 17px;
  display: flex;
  flex-direction: column;
}

.gs-btn {
  flex: 1;
  display: flex;
  flex-direction: column;
  align-items: center;
  justify-content: center;
  gap: 2px;
  border: 1px solid #4a4a4a;
  margin-left: -1px;
  background: #2d2d2d;
}

.gs-btn b {
  width: 8px;
  height: 1px;
  background: #d0d0d0;
}

.edit-group .small-btn {
  gap: 5px;
}

.ribbon-end {
  flex: 1;
  display: flex;
  align-items: flex-end;
  justify-content: flex-end;
  padding: 0 11px 6px 0;
}

/* document */
.doc-area {
  flex: 1;
  min-height: 0;
  display: flex;
  background: #262626;
}

.page {
  width: 1326px;
  margin-left: 286px;
  margin-right: 288px;
  padding: 39px 0 0 31px;
  border-left: 1px solid #6a6a6a;
  border-right: 1px solid #6a6a6a;
  overflow: hidden;
}

.grid {
  width: 1259px;
  table-layout: fixed;
  border-collapse: collapse;
  font-family: Lato, "Liberation Sans", sans-serif;
  font-size: 28px;
  letter-spacing: 0;
  color: #f4f4f4;
}

.c-num { width: 116px; }
.c-name { width: 622px; }
.c-exec { width: 156px; }
.c-code { width: 249px; }
.c-paid { width: 116px; }

.grid th, .grid td {
  height: 38.100px;
  padding: 0;
  border: 1px solid #ececec;
  text-align: center;
  vertical-align: middle;
  line-height: 30px;
}

.grid th {
  font-weight: 700;
}

.grid td.soft {
  color: #d8d8d8;
}

.grid u {
  text-decoration: underline wavy #e53535 1px;
  text-underline-offset: 2px;
  text-decoration-skip-ink: none;
}

.grid u.grammar {
  text-decoration-color: #3f6fe0;
}

.scrollbar {
  width: 20px;
  flex: none;
  margin-left: auto;
  padding: 2px 1px 2px 0;
  display: flex;
  flex-direction: column;
  background: #333;
}

.sb-btn {
  height: 19px;
  flex: none;
  display: flex;
  align-items: center;
  justify-content: center;
  border: 1px solid #7a7a7a;
  background: #505050;
}

.sb-thumb {
  height: 175px;
  margin-top: 63px;
  border: 1px solid #7a7a7a;
  background: #505050;
}

.sb-btn.down {
  margin-top: auto;
}

/* status bar */
.statusbar {
  height: 27px;
  flex: none;
  display: flex;
  align-items: center;
  border-top: 1px solid #454545;
  background: #262626;
  font-size: 13px;
  color: #dcdcdc;
}

.st-page { margin-left: 9px; width: 105px; }
.st-words { width: 100px; }
.st-proof { margin-right: 22px; }

.st-right {
  position: relative;
  margin-left: auto;
  height: 100%;
  display: flex;
  align-items: center;
  padding-right: 11px;
}

.view-on {
  width: 50px;
  height: 100%;
  margin-left: 17px;
  display: flex;
  align-items: center;
  justify-content: center;
  background: #505050;
}

.zoom-btn {
  position: relative;
  width: 10px;
  height: 1px;
  background: #e0e0e0;
}

.zoom-btn.plus::after {
  content: "";
  position: absolute;
  left: 4.500px;
  top: -5px;
  width: 1px;
  height: 11px;
  background: #e0e0e0;
}

.slider {
  position: relative;
  width: 125px;
  height: 1px;
  background: #e0e0e0;
}

.slider i {
  position: absolute;
  left: 64px;
  top: -7px;
  width: 6px;
  height: 14px;
  background: #f2f2f2;
}

.zoom-text {
  margin-left: 17px;
  width: 34px;
  white-space: nowrap;
}

/* taskbar */
.taskbar {
  height: 50px;
  flex: none;
  display: flex;
  background: #1b1c1c;
}

.task-cell {
  width: 60px;
  display: flex;
  align-items: center;
  justify-content: center;
}

.app-cell {
  width: 62px;
  position: relative;
}

.task-cell.running {
  margin-left: 3px;
}

.running::after, .active-app::after {
  content: "";
  position: absolute;
  bottom: 0;
  height: 3px;
  background: #b4b4b4;
}

.running::after { left: 5px; right: 6px; }
.active-app::after { left: 0; right: 0; }

.active-app {
  background: #4c4c4c;
}

.word-icon {
  position: relative;
  width: 30px;
  height: 32px;
}

.w-layer {
  position: absolute;
  left: 7px;
  right: 0;
  height: 8px;
}

.l1 { top: 0; background: #41a5ee; }
.l2 { top: 8px; background: #2b7cd3; }
.l3 { top: 16px; background: #185abd; }
.l4 { top: 24px; background: #103f91; }

.w-badge {
  position: absolute;
  left: 0;
  top: 8px;
  width: 17px;
  height: 17px;
  line-height: 17px;
  text-align: center;
  background: #1d5fc0;
  color: #fff;
  font-size: 12px;
  font-weight: 700;
  letter-spacing: 0;
}

.tray {
  margin-left: auto;
  display: flex;
  align-items: center;
  font-size: 15px;
  color: #e6e6e6;
}

.lang {
  width: 32px;
  margin-left: 12px;
  text-align: center;
  line-height: 23px;
  white-space: nowrap;
}

.clock {
  width: 80px;
  margin-left: 10px;
  text-align: center;
  line-height: 23px;
  white-space: nowrap;
}

.show-desktop {
  width: 1px;
  height: 50px;
  margin-left: 23px;
  margin-right: 6px;
  background: #555;
}
```
